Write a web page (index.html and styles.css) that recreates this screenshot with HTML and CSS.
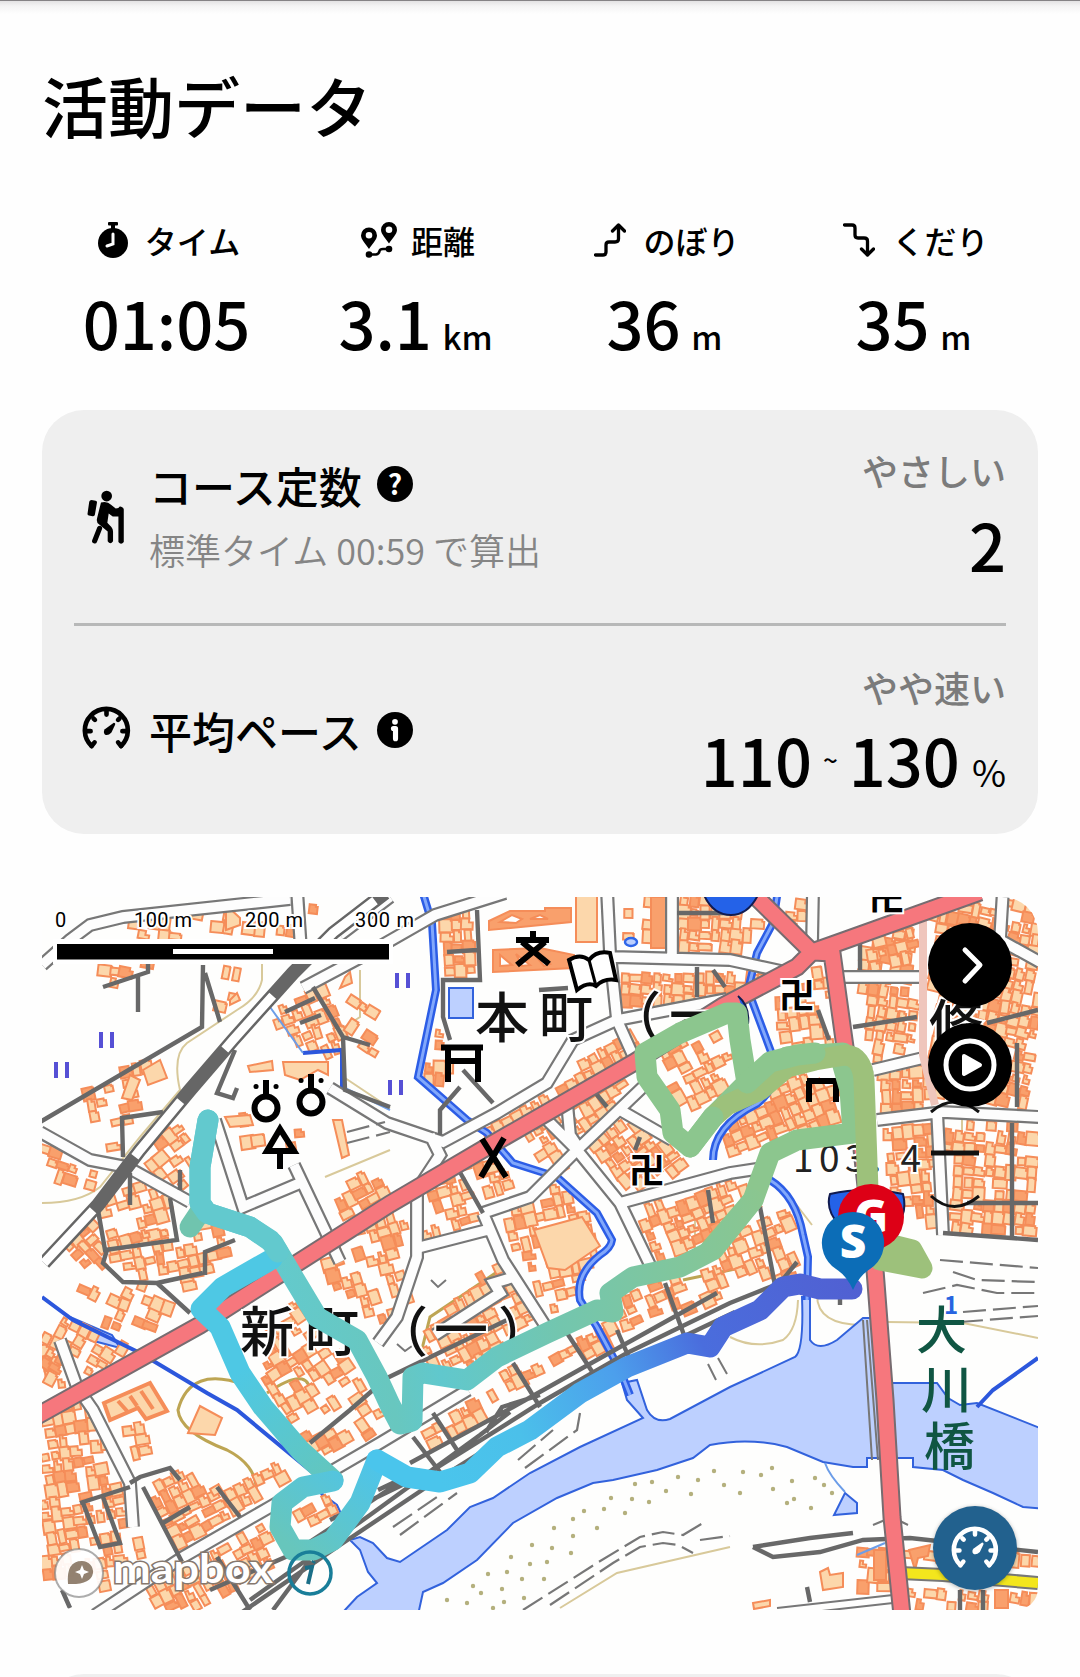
FILE: index.html
```html
<!DOCTYPE html>
<html lang="ja">
<head>
  <meta charset="UTF-8" />
  <title>活動データ</title>
  <link rel="stylesheet" href="styles.css">
</head>
<body>
  <!-- shared icon -->
  <svg class="sprite" width="0" height="0">
    <symbol id="gauge" viewBox="120 912 154 136">
      <g fill="none" stroke="currentColor" stroke-linecap="round">
        <path d="M152 1033A65 65 0 1 1 241 1033" stroke-width="14"/>
        <path d="M152 1033L161 1022M241 1033L232 1022" stroke-width="14"/>
        <path d="M197 926V938M158 950L162 954M236 950L232 954M138 988H149M256 988H245" stroke-width="14"/>
      </g>
      <path d="M219 963Q225 963 223 969L212 992Q201 1003 192 998Q186 990 192 982Z" fill="currentColor"/>
    </symbol>
  </svg>

  <main>
    <h1>活動データ</h1>

    <section class="stats">
      <div class="stat">
        <div class="label">
          <svg class="icon-time" viewBox="0 0 30 36"><circle cx="15" cy="21" r="15"/><rect x="10" y="0" width="10" height="3.500" rx="1"/><rect x="13" y="2" width="4" height="6"/><path d="M15 12V22L9 24" fill="none" stroke="#fff" stroke-width="3" stroke-linecap="round"/></svg>
          <span>タイム</span>
        </div>
        <div class="value">01:05</div>
      </div>
      <div class="stat">
        <div class="label distance">
          <svg class="icon-dist" viewBox="0 0 36 36"><path fill-rule="evenodd" d="M8 5.500a8 8 0 0 1 8 8c0 4-5 9-8 13.500c-3-4.500-8-9.500-8-13.500a8 8 0 0 1 8-8zM8 10a3.300 3.300 0 1 0 0 6.600a3.300 3.300 0 0 0 0-6.600zM28 0a8 8 0 0 1 8 8c0 4-5 9-8 13.500c-3-4.500-8-9.500-8-13.500a8 8 0 0 1 8-8zM28 4.500a3.300 3.300 0 1 0 0 6.600a3.300 3.300 0 0 0 0-6.600z"/><circle cx="8" cy="32.500" r="3.300"/><circle cx="28" cy="27" r="3.300"/><path d="M8 32.500H15Q18 32 18.500 29Q19 27 22 27H28" fill="none" stroke="#000" stroke-width="2.600"/></svg>
          <span>距離</span>
        </div>
        <div class="value">3.1 <small>km</small></div>
      </div>
      <div class="stat">
        <div class="label">
          <svg class="icon-up" viewBox="0 0 32 34"><path d="M1.500 32H9Q12 32 12 29V22Q12 19 15 19H21Q24.500 19 24.500 16V3M18.500 8L24.500 2L30.500 8"/></svg>
          <span>のぼり</span>
        </div>
        <div class="value">36 <small>m</small></div>
      </div>
      <div class="stat">
        <div class="label">
          <svg class="icon-up" viewBox="0 0 32 34"><path d="M1.500 2H9Q12 2 12 5V12Q12 15 15 15H21Q24.500 15 24.500 18V31M18.500 26L24.500 32L30.500 26"/></svg>
          <span>くだり</span>
        </div>
        <div class="value">35 <small>m</small></div>
      </div>
    </section>

    <section class="card">
      <div class="row">
        <div class="icon">
          <svg class="hiker" viewBox="143 268 112 164">
            <circle cx="201" cy="286" r="16"/>
            <path d="M156 298L168 300Q173 301 172 306L166 341Q165 347 159 346L148 344Q143 343 144 338L149 303Q150 298 156 298Z"/>
            <path d="M184 305Q203 300 214 312L228 323L236 322Q240 315 246 319Q252 321 252 326V423Q244 433 236 423V347L219 347L207 338L203 366L215 378Q220 384 220 391V421Q212 433 204 421V392L178 370Q170 364 172 354Z"/>
            <path d="M180 382L165 420" fill="none" stroke="#000" stroke-width="15" stroke-linecap="round"/>
          </svg>
        </div>
        <div class="name">
          <h2>コース定数 <i class="help">?</i></h2>
          <p>標準タイム 00:59 で算出</p>
        </div>
        <div class="result">
          <p>やさしい</p>
          <div class="value">2</div>
        </div>
      </div>
      <div class="row pace-row">
        <div class="icon"><svg class="gauge"><use href="#gauge"/></svg></div>
        <div class="name">
          <h2>平均ペース <i class="help"><svg viewBox="0 0 35 35"><circle cx="17.500" cy="9.500" r="2.800"/><path d="M16 16H18V26" fill="none" stroke="#fff" stroke-width="5" stroke-linecap="round" stroke-linejoin="round"/></svg></i></h2>
        </div>
        <div class="result">
          <p>やや速い</p>
          <div class="value range">110<span class="tilde">~</span>130<span class="percent">%</span></div>
        </div>
      </div>
    </section>

    <section class="map">
      <svg class="map-canvas" viewBox="42 897 996 713">
        <defs>
          <g id="white-roads">
            <path d="M40 1132L90 1160L127 1167L190 1202M42 965L70 940L90 925L123 917L290 899M297 890L301 950M340 935L390 897M303 988L365 955L435 915L505 893"/>
            <path d="M215 1120L243 1207L300 1183M294 1165L340 1262M330 1088L387 1123L443 1142L497 1113L547 1083L573 1040L617 1020L727 999M430 1135L440 1155L417 1190L417 1257L397 1317L378 1343"/>
            <path d="M417 1248L487 1230M483 1213L530 1197L577 1150L645 1085M483 1213L503 1260L548 1330M547 1120L577 1150L620 1203L650 1265M567 1103L570 1135L580 1150M620 1203L730 1173L770 1167M607 890L610 953L617 1020L635 1060M613 957L730 960L790 973M672 890V960M813 890L812 945M843 977H922M620 1110L672 1140"/>
            <path d="M937 1110L943 1235M873 1070L923 1058M877 1120L943 1112L1040 1117M1003 890L1000 940L1040 962M60 1340L77 1387L93 1410L130 1483L133 1527M468 1390L380 1443L270 1507L183 1557L95 1615M435 1335L500 1293L494 1283L514 1277"/>
          </g>
          <linearGradient id="g-south" gradientUnits="userSpaceOnUse" x1="860" y1="1290" x2="440" y2="1480">
            <stop offset="0" stop-color="#5160d2"/><stop offset=".36" stop-color="#4a6ddd"/><stop offset=".56" stop-color="#4c9fec"/><stop offset=".8" stop-color="#4bc0ea"/><stop offset="1" stop-color="#4ac5ec"/>
          </linearGradient>
          <linearGradient id="g-hook" gradientUnits="userSpaceOnUse" x1="375" y1="1450" x2="295" y2="1550">
            <stop offset="0" stop-color="#4bc4ee"/><stop offset="1" stop-color="#67c6bc"/>
          </linearGradient>
          <linearGradient id="g-west" gradientUnits="userSpaceOnUse" x1="330" y1="1480" x2="240" y2="1370">
            <stop offset="0" stop-color="#63c6bd"/><stop offset="1" stop-color="#4ec8e4"/>
          </linearGradient>
          <linearGradient id="g-back" gradientUnits="userSpaceOnUse" x1="270" y1="1250" x2="770" y2="1180">
            <stop offset="0" stop-color="#63cacd"/><stop offset=".2" stop-color="#68c7bf"/><stop offset=".3" stop-color="#60c8cd"/><stop offset=".55" stop-color="#73c6ae"/><stop offset="1" stop-color="#8cc68e"/>
          </linearGradient>
        </defs>
        <rect x="42" y="897" width="996" height="713" fill="#fefefd"/>

        <g class="contour">
          <path d="M262 950V980Q258 998 237 1010L187 1043Q172 1055 180 1090L140 1137L100 1187Q80 1203 42 1203M360 970V1017L343 1028M345 1078L390 1108M325 1177L390 1150"/>
          <path class="index" d="M245 1385Q190 1365 178 1410Q180 1432 227 1450Q262 1468 255 1500M267 1393Q315 1360 310 1403M420 1357L430 1317L500 1270M620 1200L673 1187L735 1170M683 1280L740 1268"/>
          <path d="M730 1337Q755 1350 783 1340Q797 1330 798 1300M817 1295Q817 1325 863 1325M887 1322L963 1323L1038 1338M560 1608L617 1573L730 1547M695 1215V1255M962 1110V1210M785 1190L812 1225"/>
        </g>

        <g class="river">
          <path d="M345 1610L357 1597L377 1583L368 1572L360 1550L350 1540L360 1537L373 1543L387 1558L400 1562L447 1530L470 1507L493 1498L530 1473L580 1447L643 1418L627 1400L622 1383L637 1380L647 1410Q655 1424 670 1419L730 1387L795 1357Q804 1350 802 1297H810V1340Q818 1352 837 1340L863 1318H874L884 1383H937L948 1398L960 1405L977 1403L1045 1430V1509L1023 1507L993 1493L963 1480L943 1470L913 1467V1458H867V1467H853L823 1462L787 1447Q750 1437 710 1445L693 1458L657 1470L613 1480L593 1483L557 1498L513 1523L477 1560L443 1583L423 1592L418 1615H340Z"/>
          <path d="M834 1515L857 1513V1503L845 1493ZM320 1492L337 1505L345 1522L335 1517ZM449 988H473V1018H449ZM70 1317L112 1335L120 1348L90 1340Z"/>
        </g>

        <g id="buildings" class="buildings"></g>
        <g class="school">
          <path class="solid" fill-rule="evenodd" d="M489 921L510 911H545V908H571V922L489 930ZM500 922L512 915L522 919L516 923ZM530 919L540 915L548 919ZM493 950L540 948L574 955V968L493 972ZM500 966V955L512 965ZM516 954L530 965L522 966ZM535 955L550 964L544 966Z"/>
          <path class="solid" d="M651 897H666V948H651Z"/>
          <path d="M576 890H597V942H576ZM534 1230L582 1217L600 1246L565 1270L548 1268Z"/>
          <path class="thick" d="M104 1403L150 1383L167 1411L146 1419L138 1408L110 1420ZM118 1401L127 1411M130 1396L137 1406M141 1391L153 1409"/>
          <path d="M188 1433L200 1406L222 1418L215 1435ZM143 1070L160 1060L167 1078L148 1085ZM130 1075L140 1080L132 1100L122 1098ZM248 1066L272 1061L273 1070L250 1072ZM283 1062H328V1075L318 1070L300 1080L285 1075ZM225 1117L250 1115L253 1125L230 1127ZM333 1120H342L349 1155L342 1158ZM345 977L350 972L352 983L340 988ZM230 1000L237 993L240 1000L230 1005ZM226 905V930L240 925V918Z"/>
          <path class="solid" d="M874 1550H886V1580H874ZM909 1550L930 1545L928 1556L918 1558L915 1570ZM995 1590H1008V1608H995Z"/>
          <path d="M820 1572L828 1568L830 1575L843 1573V1587L823 1590ZM753 1603L770 1600V1606L754 1609Z"/>
        </g>

        <g class="canal">
          <path id="canal-line" d="M422 890L432 923L436 990L418 1077L467 1120L487 1133L513 1163L557 1177L597 1213L612 1240Q611 1248 600 1255Q575 1275 580 1300L597 1327L620 1370L630 1395M778 890L773 923L757 953L748 990L773 1057Q780 1085 757 1104Q713 1126 713 1160M770 1180Q796 1196 803 1235L808 1257L807 1300"/>
        </g>
        <use href="#canal-line" class="canal-water"/>
        <path class="stream" d="M42 1297L73 1320L140 1353L207 1393L237 1410L312 1472M1038 1358L993 1390L977 1407M303 1053L342 1050V1088"/>
        <path class="brook" d="M270 1007L303 1053M345 1088L390 1110M825 1463Q829 1475 845 1492M857 1555L885 1543"/>

        <use href="#white-roads" class="road-edge"/>
        <use href="#white-roads" class="road-fill"/>
        <path class="road-pink" d="M923 918V1055L935 1105"/>

        <g class="lanes">
          <path d="M103 987L148 972V960M138 977V1012M203 965L202 1027L40 1122M205 973L220 1022M313 987L343 1037L345 1090L390 1107M285 1012L315 998M300 1023L321 1015M343 1037L370 1045M235 1050L217 1093L233 1098L237 1088M163 1112L122 1118L123 1157M98 1210L105 1250L177 1240L170 1198M130 1173V1205M180 1170V1190M235 1240L205 1252V1275"/>
          <path d="M107 1250L103 1263L123 1282L157 1283L190 1313M157 1283L203 1273M130 1483L140 1477L170 1468L180 1480M80 1503L130 1487M83 1503L100 1547L120 1543L103 1497M143 1487L182 1562M163 1523L190 1507M217 1487L240 1517M310 1443L350 1410L373 1390M217 1557L250 1610M387 1378L507 1320M62 1590L70 1608"/>
          <path d="M477 910L480 980H443V1017L450 1040M447 952L477 950M463 1070L493 1103M460 1087L440 1110V1135M457 1167L483 1213M539 990L568 988M677 913H730M697 967V997M713 970L725 987M593 1090L607 1107M708 1190L713 1223M640 1137L635 1150M853 1027L917 1017M860 943V970M1017 1043V1107M1012 1123V1240M1038 1010L987 1023M967 1203H1038M943 1233L1038 1240M818 1010L829 1040M760 1207L775 1285M665 1283L684 1335"/>
          <path d="M410 1463L513 1407L620 1347L717 1293M330 1520L433 1470L540 1403L627 1353L730 1303L780 1283L797 1262M238 1615L340 1545L440 1478L545 1412L632 1361L735 1312M210 1590L290 1555L400 1482M250 1600L370 1515L480 1435L510 1412M513 1363L540 1407M567 1333L593 1373M617 1330L630 1360M433 1413L457 1450M413 1437L440 1472M486 1432L502 1407L540 1395M378 1490L420 1470M273 1610L310 1560"/>
          <path d="M753 1547L773 1557L820 1552L863 1540L910 1538L1038 1552M753 1547L810 1538L853 1533M807 1587L810 1602M960 1590V1612M983 1590V1612M840 1297V1305"/>
        </g>
        <path class="thin" d="M777 1608L893 1595M813 1612L893 1603M863 1320L872 1460M867 1320L878 1460M873 1525L885 1520M898 1520L908 1525M708 1364L716 1380M718 1358L727 1374M431 1280L438 1287L446 1280M397 1344L405 1351L412 1346"/>
        <path class="dashes" d="M523 1610L597 1563L640 1537L663 1532L683 1535L703 1523M550 1605L613 1563L640 1547L663 1543L678 1545L693 1553M393 1527L440 1495M400 1535L457 1493M518 1460L553 1430M525 1468L577 1430L580 1413M940 1260L1038 1268M953 1272L977 1280L1038 1282M923 1293L957 1285L997 1293H1038M963 1312L1038 1306M960 1322L1038 1316M347 1132L385 1122M347 1143L390 1132M700 1540L730 1536"/>

        <path class="rail-edge" d="M44 1263L98 1205L140 1150L190 1090L233 1040L293 973L333 933L385 893"/>
        <path class="rail" d="M44 1263L98 1205L140 1150L190 1090L233 1040L293 973L333 933L385 893"/>

        <path class="yellow-edge" d="M900 1573L943 1575L1038 1583"/>
        <path class="yellow" d="M900 1573L943 1575L1038 1583"/>
        <path class="trunk-edge" d="M35 1417L200 1325L390 1204L487 1147L633 1063L723 1006L797 967L812 952L843 941L980 892M752 893L812 952L832 953L845 1047L857 1103L875 1270L885 1400L892 1517L902 1615"/>
        <path class="trunk" d="M35 1417L200 1325L390 1204L487 1147L633 1063L723 1006L797 967L812 952L843 941L980 892M752 893L812 952L832 953L845 1047L857 1103L875 1270L885 1400L892 1517L902 1615"/>
        <path d="M704 895Q713 915 731 915Q748 915 758 895Z" class="shield"/>
        <path d="M830 1194Q865 1186 903 1194Q908 1215 895 1226H840Q825 1210 830 1194ZM738 996Q750 1006 748 1024" class="shield"/>

        <path class="paddy" d="M101 1032V1048M112 1032V1048M56 1062V1078M67 1062V1078M397 973V988M408 973V988M390 1080V1095M401 1080V1095"/>
        <ellipse cx="631" cy="942" rx="6" ry="4" fill="#bcd0ff" stroke="#2f66e8" stroke-width="2.500"/>

        <g class="symbols">
          <circle cx="266" cy="1108" r="11.500"/><path d="M266 1096V1080"/>
          <circle cx="311" cy="1102" r="11.500"/><path d="M311 1090V1074"/>
          <path d="M280 1129L267 1151H294ZM280 1153V1169"/>
          <path d="M441 1047.500H483M446 1061H480M448 1048V1082M478 1048V1082"/>
          <path d="M807 1081H842M809 1081V1102M836 1081V1102"/>
          <path d="M482 1139L506 1177M504 1138L481 1177"/>
          <path d="M516 940H549M533 931V940M522 942L549 964M545 942L517 965"/>
          <path fill="#fff" stroke-width="4" d="M569 960Q580 953 589 960Q597 950 610 953L616 980Q604 978 596 986Q588 981 577 990Z"/>
          <path d="M589 960L596 986" stroke-width="3"/>
          <path stroke-width="5" d="M256 1086.500h.1M276 1086.500h.1M301 1080.500h.1M321 1080.500h.1" stroke-linecap="round"/>
        </g>
        <g class="manji">
          <text x="629" y="1184">卍</text><text x="779" y="1009">卍</text><text x="869" y="911">卍</text>
        </g>
        <g class="place">
          <text x="475" y="1038">本</text><text x="539" y="1038">町</text><text x="607" y="1037">（</text><text x="669" y="1036">一</text>
          <text x="240" y="1352">新</text><text x="305" y="1352">町</text><text x="374" y="1352">（</text><text x="434" y="1350">一</text><text x="498" y="1352">）</text>
          <text x="929" y="1045">修</text>
          <path d="M931 1112Q954 1092 979 1112M931 1196Q954 1217 979 1196" fill="none" stroke="#111" stroke-width="3"/>
          <path d="M931 1153H979" fill="none" stroke="#111" stroke-width="5"/>
        </g>
        <text class="height" x="793" y="1172" textLength="128">103. 4</text>
        <g class="bridge">
          <text x="916" y="1349">大</text><text x="921" y="1408">川</text><text x="924" y="1465">橋</text>
        </g>
        <text class="one" x="944" y="1314">1</text>

        <g class="route">
          <path stroke="#8cc68e" d="M842 1062L850 1090L853 1133L797 1140L770 1153L753 1200L710 1250"/>
          <path stroke="#8cc68e" d="M760 1087L787 1057L843 1053M727 1103L747 1083L740 1040L737 1013H727L680 1033L645 1053L647 1077L670 1110L673 1133L690 1147L713 1117L727 1103L760 1087"/>
          <path stroke="#9dc17b" d="M713 1117L727 1105L760 1090L787 1067L815 1060L845 1055Q862 1056 864 1080L868 1190L872 1240L912 1250L922 1268L880 1260"/>
          <path stroke="#8cc68e" d="M690 1147L713 1117M747 1083L770 1062L797 1055L815 1053"/>
          <path stroke="url(#g-back)" d="M753 1200L713 1250L680 1267L633 1277L610 1293L613 1312L597 1310L547 1333L497 1357L467 1380L423 1373L413 1377L412 1421L400 1424L390 1405L377 1377L357 1340L317 1317L293 1277L273 1243L250 1227L207 1213L200 1203V1167L208 1120"/>
          <path stroke="#70c4ae" d="M200 1212L190 1227"/>
          <path stroke="url(#g-west)" d="M333 1480L300 1450L263 1407L240 1373L220 1327L201 1309L223 1287L272 1259"/>
          <path stroke="#62c9ce" d="M208 1120L200 1167V1203L207 1213L250 1227L270 1240L278 1252"/>
          <path stroke="url(#g-hook)" d="M333 1481L303 1487L282 1503L280 1527L293 1550L313 1550L333 1540L360 1503L377 1460"/>
          <path stroke="url(#g-south)" d="M377 1460L407 1477L440 1482L470 1473L497 1447L530 1430L580 1393L627 1367L687 1343L710 1347L723 1327L760 1310L783 1287L800 1284L820 1289L852 1289"/>
        </g>

        <g class="pins">
          <circle cx="871" cy="1217" r="33" fill="#dd0016"/>
          <text x="871" y="1233">G</text>
          <path d="M853 1212A31 31 0 0 1 870 1269Q859 1276 853 1290Q847 1276 836 1269A31 31 0 0 1 853 1212Z" fill="#0c6db7"/>
          <text x="853" y="1258">S</text>
        </g>

        <g class="scale">
          <rect x="53" y="939" width="340" height="25" fill="#fff"/>
          <rect x="57" y="944" width="332" height="15.500"/>
          <rect x="173" y="949" width="100" height="5" fill="#fff"/>
          <text x="55" y="927">0</text><text x="134" y="927" textLength="58">100 m</text><text x="245" y="927" textLength="58">200 m</text><text x="355" y="927" textLength="59">300 m</text>
        </g>

        <g class="mapbox">
          <circle cx="79" cy="1573" r="24" fill="#fff" fill-opacity=".92" stroke="#777" stroke-opacity=".6" stroke-width="2"/>
          <path d="M68 1584Q66 1561 82 1561A11 11 0 0 1 93 1573Q91 1585 68 1584Z" fill="#806c58" fill-opacity=".85"/>
          <path d="M82 1565L84 1570L89 1572L84 1574L82 1579L80 1574L75 1572L80 1570Z" fill="#fff"/>
          <text x="113" y="1583" textLength="160" lengthAdjust="spacingAndGlyphs">mapbox</text>
          <circle cx="310" cy="1573" r="21" fill="none" stroke="#197e99" stroke-width="3.500"/>
          <path d="M305 1568L312 1567L308 1584M314 1561L313 1563" fill="none" stroke="#1b6f88" stroke-width="4"/>
        </g>
      </svg>

      <div class="controls">
        <button><svg viewBox="0 0 84 84"><path d="M37 27L52 42L37 58" fill="none" stroke="#fff" stroke-width="5" stroke-linecap="round" stroke-linejoin="round"/></svg></button>
        <button><svg viewBox="0 0 84 84"><circle cx="42" cy="42" r="24" fill="none" stroke="#fff" stroke-width="5"/><path d="M36 33L52 42L36 51Z" fill="#fff" stroke="#fff" stroke-width="4" stroke-linejoin="round"/></svg></button>
      </div>
      <button class="pace"><svg><use href="#gauge"/></svg></button>
    </section>

    <div class="next-card"></div>
  </main>

  <script src="map.js"></script>
</body>
</html>
```
FILE: styles.css
```css
* { box-sizing: border-box; }

body {
  margin: 0;
  background: linear-gradient(#858385 0 1px, #e3e2e3 1px, #f4f4f4 6px, #fefefe 14px) no-repeat #fefefe;
  color: #000;
  font-family: "Noto Sans CJK JP", sans-serif;
}

.sprite { position: absolute; }

main {
  height: 1677px;
  padding: 57px 42px 0;
  overflow: hidden;
}

h1, h2, p { margin: 0; }

h1 {
  font-size: 66px;
  font-weight: 500;
  line-height: 94px;
}

.stats {
  display: grid;
  grid-template-columns: repeat(4, 1fr);
  margin-top: 67px;
  height: 192px;
}

.stat { text-align: center; }

.label {
  display: flex;
  justify-content: center;
  align-items: center;
  gap: 17px;
  height: 44px;
  padding-left: 5px;
  font-size: 32px;
  font-weight: 500;
  line-height: 44px;
}

.label.distance { gap: 14px; }

.icon-time { width: 30px; height: 36px; }
.icon-dist { width: 36px; height: 36px; }

.icon-up {
  width: 32px;
  height: 34px;
  fill: none;
  stroke: #000;
  stroke-width: 3.3;
  stroke-linecap: round;
  stroke-linejoin: round;
}

.value {
  font-size: 65px;
  font-weight: 500;
  line-height: 80px;
  white-space: nowrap;
}

.stat .value { margin-top: 20px; }

.value small {
  font-size: 33px;
  margin-left: -4px;
}

.card {
  height: 424px;
  padding: 0 32px;
  border-radius: 42px;
  background: #efefef;
}

.row {
  display: flex;
  align-items: center;
  height: 213px;
}

.row + .row {
  height: 211px;
  border-top: 3px solid #b7b8b8;
}

.icon {
  width: 75px;
  padding-left: 8px;
}

.hiker { display: block; width: 38px; height: 55px; margin: 1px 0 0 5px; }
.gauge { display: block; width: 51px; height: 45px; margin: -4px 0 0 -1px; }

.name { flex: 1; }

.name h2 {
  display: flex;
  align-items: center;
  gap: 15px;
  font-size: 43px;
  font-weight: 500;
  line-height: 60px;
}

.name p {
  margin-top: 4px;
  font-size: 36px;
  font-weight: 350;
  line-height: 60px;
  color: #858585;
}

.help {
  width: 36px;
  height: 36px;
  margin-top: -1px;
  border-radius: 50%;
  background: #000;
  color: #fff;
  font-size: 28px;
  font-style: normal;
  font-weight: 700;
  line-height: 35px;
  text-align: center;
}

.help svg { display: block; fill: #fff; }

.result { text-align: right; }

.result p {
  margin-bottom: 6px;
  font-size: 36px;
  font-weight: 500;
  line-height: 56px;
  color: #7b7b7b;
}

.row .result { margin-top: -8px; }
.pace-row .result { margin-top: 9px; }
.pace-row .result p { margin-bottom: 4px; }

.range { display: flex; align-items: baseline; }
.tilde { margin: 0 11px; font-size: 26px; line-height: 30px; transform: translateY(-17px); }
.percent { margin-left: 12px; font-size: 37px; font-weight: 400; }

.map {
  position: relative;
  height: 713px;
  margin-top: 63px;
  border-radius: 36px 36px 22px 36px;
  overflow: hidden;
}

.map-canvas { display: block; width: 100%; height: 100%; }

.contour { fill: none; stroke: #d8c99a; stroke-width: 2; }
.contour .index { stroke: #bda553; stroke-width: 3; }
.river { fill: #bdd0ff; stroke: #3262dc; stroke-width: 2; }
.buildings, .school { fill: #fcd7ab; stroke: #f58d59; stroke-width: 2; }
.buildings .dense, .school .solid { fill: #f9a06c; }
.school .thick { stroke-width: 4; }
.canal { fill: none; stroke: #2c5de6; stroke-width: 8; }
.canal-water { fill: none; stroke: #82a8fb; stroke-width: 3; }
.stream { fill: none; stroke: #2c57dc; stroke-width: 4; }
.brook { fill: none; stroke: #6c9de8; stroke-width: 2; }
.road-edge { fill: none; stroke: #777; stroke-width: 14; }
.road-fill { fill: none; stroke: #fdfdfd; stroke-width: 9.6; }
.road-pink { fill: none; stroke: #efc6bc; stroke-width: 8; }
.lanes { fill: none; stroke: #686868; stroke-width: 4.4; }
.thin { fill: none; stroke: #777; stroke-width: 2; }
.dashes { fill: none; stroke: #777; stroke-width: 2.2; stroke-dasharray: 23 7; }
.rail-edge { fill: none; stroke: #666; stroke-width: 14; }
.rail { fill: none; stroke: #fff; stroke-width: 9; stroke-dasharray: 72 68; }
.yellow-edge { fill: none; stroke: #777; stroke-width: 14; }
.yellow { fill: none; stroke: #f3e61d; stroke-width: 10; }
.trunk-edge { fill: none; stroke: #776c70; stroke-width: 19; }
.trunk { fill: none; stroke: #f6777d; stroke-width: 15; }
.shield { fill: #2462e8; stroke: #111b4f; stroke-width: 2; }
.paddy { stroke: #5650d5; stroke-width: 4; }
.symbols { fill: none; stroke: #000; stroke-width: 6; }
.dots { fill: #b4b07d; }

.manji { font-size: 36px; font-weight: 700; }
.place { font-size: 54px; font-weight: 500; fill: #111; }
.place text, .manji text, .height { paint-order: stroke; stroke: #fff; stroke-width: 4px; }
.height { font-size: 37px; fill: #222; }
.bridge { font-size: 51px; font-weight: 500; fill: #105643; }
.one { font-size: 24px; font-weight: 700; fill: #2864e0; }

.route {
  fill: none;
  stroke-width: 21;
  stroke-linecap: round;
  stroke-linejoin: round;
}

.pins {
  fill: #fff;
  font: 800 46px "Open Sans", sans-serif;
  text-anchor: middle;
}

.scale text {
  font: 20px Roboto, sans-serif;
  paint-order: stroke;
  stroke: #fff;
  stroke-width: 4px;
}

.mapbox text {
  font: 700 41px Lato, sans-serif;
  fill: #fff;
  paint-order: stroke;
  stroke: #86786e;
  stroke-width: 3px;
}

.controls {
  position: absolute;
  top: 26px;
  right: 26px;
  display: flex;
  flex-direction: column;
  gap: 16px;
}

.map button {
  width: 84px;
  height: 84px;
  padding: 0;
  border: none;
  border-radius: 50%;
  background: #000;
  color: #fff;
}

.map button svg { display: block; }

.map .pace {
  position: absolute;
  right: 21px;
  bottom: 20px;
  background: #22618e;
  box-shadow: 0 1px 4px rgba(0,0,0,0.3);
}

.map .pace svg {
  width: 50px;
  height: 44px;
  margin: 0 auto;
}

.next-card {
  height: 120px;
  margin-top: 64px;
  border-radius: 42px;
  background: #efefef;
}
```
FILE: map.js
```js
// town blocks: outline, street angle, how full the block is
const blocks = [
  { p: [[862,950],[915,925],[915,1050],[875,1060],[868,1030],[852,1000]], a: 5, d: 0.9 },
  { p: [[932,912],[1038,897],[1038,1108],[935,1102]], a: 8, d: 0.9 },
  { p: [[876,1075],[925,1066],[932,1105],[880,1112]], a: -4, d: 0.95 },
  { p: [[880,1126],[932,1120],[938,1232],[890,1200]], a: -8, d: 0.85 },
  { p: [[948,1125],[1038,1125],[1038,1235],[950,1228]], a: 2, d: 0.8 },
  { p: [[620,900],[662,900],[662,945],[622,948]], a: 0, d: 0.4 },
  { p: [[680,900],[720,900],[765,925],[745,952],[680,950]], a: 0, d: 0.95 },
  { p: [[785,900],[805,900],[805,935],[785,925]], a: 0, d: 0.8 },
  { p: [[620,968],[800,972],[740,995],[626,1010]], a: 0, d: 0.92 },
  { p: [[855,935],[915,912],[915,965],[850,968]], a: -15, d: 0.6 },
  { p: [[765,1000],[830,960],[838,1040],[790,1050]], a: -10, d: 0.6 },
  { p: [[440,905],[472,905],[473,978],[444,978]], a: -5, d: 0.9 },
  { p: [[437,1015],[447,1045],[460,1060],[432,1095],[426,1075]], a: 0, d: 0.7 },
  { p: [[485,1135],[630,1030],[640,1055],[500,1135]], a: -30, d: 0.9 },
  { p: [[520,1130],[625,1075],[625,1095],[580,1140],[545,1115],[575,1175],[540,1160]], a: -35, d: 0.9 },
  { p: [[590,1145],[625,1120],[665,1145],[690,1170],[625,1190]], a: -40, d: 0.95 },
  { p: [[660,1050],[725,1025],[735,1090],[700,1125],[680,1120],[665,1080]], a: -30, d: 0.6 },
  { p: [[725,1155],[730,1125],[800,1075],[840,1085],[838,1128],[770,1135]], a: -25, d: 0.95 },
  { p: [[630,1215],[735,1180],[750,1190],[720,1240],[660,1262]], a: -25, d: 0.85 },
  { p: [[765,1185],[795,1225],[795,1275],[735,1295],[620,1330],[625,1290],[710,1262]], a: -25, d: 0.65 },
  { p: [[425,1185],[450,1160],[480,1210],[478,1225],[425,1242]], a: -20, d: 0.6 },
  { p: [[465,1160],[510,1165],[520,1190],[490,1205]], a: -20, d: 0.7 },
  { p: [[500,1220],[560,1185],[595,1220],[600,1250],[575,1290],[555,1320]], a: -15, d: 0.75 },
  { p: [[385,1210],[408,1200],[408,1300],[385,1330],[310,1265]], a: -20, d: 0.5 },
  { p: [[440,1310],[500,1262],[535,1320],[470,1375],[410,1370]], a: -30, d: 0.75 },
  { p: [[425,1430],[520,1365],[610,1325],[615,1340],[500,1400],[440,1450]], a: -30, d: 0.85 },
  { p: [[44,1345],[58,1345],[120,1470],[125,1535],[165,1540],[100,1590],[44,1580]], a: -12, d: 0.7 },
  { p: [[120,1430],[142,1425],[152,1455],[130,1460]], a: -15, d: 0.9 },
  { p: [[145,1480],[180,1470],[250,1510],[180,1550]], a: -30, d: 0.85 },
  { p: [[215,1490],[280,1465],[290,1480],[240,1515]], a: -30, d: 0.9 },
  { p: [[150,1590],[270,1520],[275,1560],[210,1605],[160,1608]], a: -30, d: 0.8 },
  { p: [[80,1275],[160,1290],[185,1310],[100,1350]], a: 20, d: 0.4 },
  { p: [[42,1308],[130,1345],[100,1372],[42,1390]], a: 25, d: 0.7 },
  { p: [[110,1240],[200,1210],[235,1245],[190,1290],[120,1270]], a: -15, d: 0.7 },
  { p: [[65,1250],[95,1220],[110,1270],[80,1270]], a: -45, d: 0.8 },
  { p: [[100,1200],[130,1170],[170,1200],[172,1235],[110,1245]], a: -20, d: 0.65 },
  { p: [[44,1145],[85,1165],[110,1175],[85,1195],[44,1170]], a: 15, d: 0.75 },
  { p: [[85,1090],[150,1060],[120,1155],[90,1140]], a: -15, d: 0.5 },
  { p: [[150,1140],[200,1100],[190,1195],[140,1160]], a: -40, d: 0.7 },
  { p: [[265,1020],[320,985],[345,1035],[330,1060],[300,1045]], a: -25, d: 0.75 },
  { p: [[330,1200],[385,1160],[385,1195],[345,1220]], a: -30, d: 0.7 },
  { p: [[250,1370],[300,1280],[320,1340],[380,1390],[385,1430],[320,1455],[290,1420]], a: -35, d: 0.55 },
  { p: [[290,1500],[330,1495],[335,1525],[300,1540]], a: -30, d: 0.6 },
  { p: [[905,1550],[1038,1555],[1038,1568],[905,1565]], a: 3, d: 0.6 },
  { p: [[905,1584],[1038,1590],[1038,1610],[910,1610]], a: 3, d: 0.65 },
  { p: [[860,1550],[885,1550],[887,1595],[862,1590]], a: 0, d: 0.7 },
  { p: [[90,955],[175,955],[160,990],[100,995]], a: 5, d: 0.3 },
  { p: [[205,960],[250,960],[240,1005],[215,1010]], a: 10, d: 0.45 },
  { p: [[130,920],[315,905],[320,930],[140,940]], a: 3, d: 0.4 },
  { p: [[345,965],[378,950],[378,1070],[350,1030]], a: 30, d: 0.25 },
  { p: [[225,1100],[330,1110],[320,1150],[240,1160]], a: -10, d: 0.2 }
];

let seed = 11;
function rnd() {
  seed = (seed * 16807) % 2147483647;
  return seed / 2147483647;
}

function inside(x, y, p) {
  let hit = false;
  for (let i = 0, j = p.length - 1; i < p.length; j = i++) {
    const [xi, yi] = p[i], [xj, yj] = p[j];
    if ((yi > y) !== (yj > y) && x < (xj - xi) * (y - yi) / (yj - yi) + xi) hit = !hit;
  }
  return hit;
}

const svgNS = "http://www.w3.org/2000/svg";
const layer = document.getElementById("buildings");

blocks.forEach(b => {
  const xs = b.p.map(q => q[0]), ys = b.p.map(q => q[1]);
  const cx = (Math.min(...xs) + Math.max(...xs)) / 2;
  const cy = (Math.min(...ys) + Math.max(...ys)) / 2;
  const r = Math.max(Math.max(...xs) - cx, Math.max(...ys) - cy) * 1.4;
  const t = b.a * Math.PI / 180;

  for (let u = -r; u < r; u += 10.5) {
    for (let v = -r; v < r; v += 11.5) {
      const x = cx + u * Math.cos(t) - v * Math.sin(t);
      const y = cy + u * Math.sin(t) + v * Math.cos(t);
      const keep = rnd() < b.d;
      const w = 6 + rnd() * 8, h = 6 + rnd() * 9, n = rnd() * 4, dark = rnd() < 0.2;
      if (!keep || !inside(x, y, b.p)) continue;
      const house = document.createElementNS(svgNS, "path");
      house.setAttribute("d", `M${-w / 2} ${-h / 2}H${w / 2 - n}V${n - h / 2}H${w / 2}V${h / 2}H${-w / 2}Z`);
      house.setAttribute("transform", `translate(${x} ${y}) rotate(${b.a + n * 2})`);
      if (dark) house.setAttribute("class", "dense");
      layer.appendChild(house);
    }
  }
});

// sand bank dots
const sand = [[447,1600],[467,1603],[473,1586],[488,1574],[481,1593],[502,1589],[504,1602],[493,1608],[507,1572],[511,1557],[522,1579],[524,1598],[530,1564],[532,1545],[544,1579],[547,1562],[552,1548],[554,1528],[571,1553],[573,1536],[573,1519],[584,1511],[597,1528],[604,1509],[611,1498],[625,1513],[632,1499],[635,1484],[649,1502],[652,1482],[666,1491],[678,1477],[691,1494],[698,1480],[714,1471],[724,1485],[740,1493],[743,1472],[761,1475],[772,1468],[773,1489],[787,1503],[792,1481],[794,1499],[811,1508],[815,1478],[824,1485],[832,1493]];
const dots = document.createElementNS(svgNS, "g");
dots.setAttribute("class", "dots");
sand.forEach(([x, y]) => {
  const c = document.createElementNS(svgNS, "circle");
  c.setAttribute("cx", x);
  c.setAttribute("cy", y);
  c.setAttribute("r", 2.2);
  dots.appendChild(c);
});
layer.after(dots);
```
